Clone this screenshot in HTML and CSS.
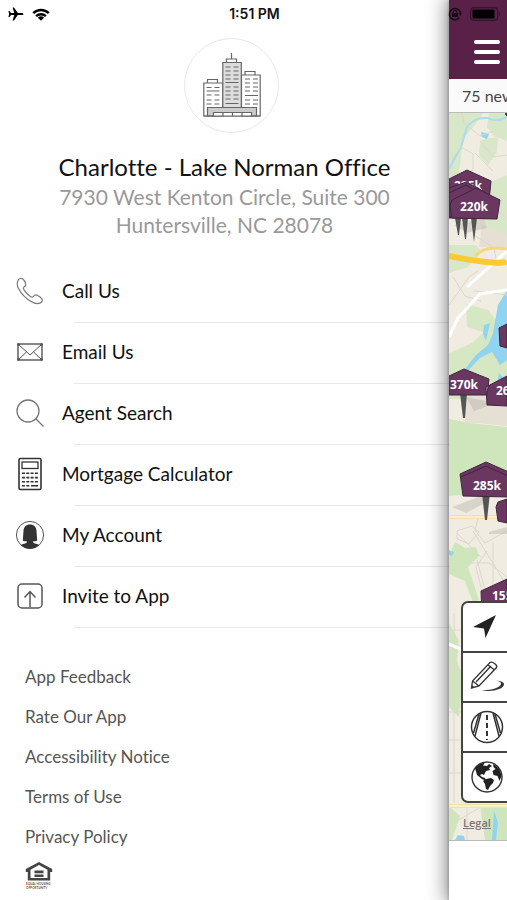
FILE: index.html
```html
<!DOCTYPE html>
<html lang="en">
<head>
<meta charset="utf-8">
<meta name="viewport" content="width=device-width, initial-scale=1">
<title>Office menu</title>
<link rel="stylesheet" href="styles.css">
</head>
<body>
<div class="app">
  <div class="status">
    <span class="status-left">
      <svg width="16" height="14" viewBox="0 0 16 14" aria-hidden="true"><path d="M15.500 7c0-.7-1-1.100-2-1.100H9.800L6 .4H4.600L6.300 5.900H3L1.500 4H.4L1.200 7 .4 10h1.100L3 8.100h3.300L4.600 13.600H6L9.800 8.100h3.700c1 0 2-.4 2-1.100z"/></svg>
      <svg width="18" height="13" viewBox="0 0 18 13" aria-hidden="true"><g fill="none" stroke="#000" stroke-width="2.400"><path d="M1.200 5.200a11.200 11.200 0 0 1 15.600 0"/><path d="M4.100 8.200a7 7 0 0 1 9.800 0"/></g><path d="M9 12.700 5.900 9.700a4.500 4.500 0 0 1 6.200 0z"/></svg>
    </span>
    <span class="status-time">1:51 PM</span>
    <span class="status-right">
      <svg width="14" height="14" viewBox="0 0 14 14" aria-hidden="true"><path d="M11.500 10.500A5.600 5.600 0 1 1 12.500 6" fill="none" stroke="#160b14" stroke-width="1.500"/><path d="M10.500 6h3.500l-1.700 3z" fill="#160b14"/><path d="M4 6.300h6V10H4z" fill="#160b14"/><path d="M5.200 6.500V5a1.800 1.800 0 0 1 3.600 0v1.500" fill="none" stroke="#160b14"/></svg>
      <svg width="31" height="14" viewBox="0 0 31 14" aria-hidden="true"><rect x=".7" y=".7" width="27" height="12.600" rx="3" fill="none" stroke="#35142d" stroke-width="1.200"/><rect x="2.500" y="2.500" width="22" height="9" rx="1"/><path d="M29 4.500q2 2.500 0 5z" fill="#35142d"/></svg>
    </span>
  </div>

  <main class="drawer">
    <header class="office">
      <div class="office-badge">
        <svg width="58" height="64" viewBox="0 0 58 64" fill="#fff" stroke="#666" stroke-width="1.200" aria-hidden="true">
          <path d="M28.500 0v6"/><path d="M23.500 9V6h10v3M4.500 30v-3.500h10V30M42 22v-3.500h10V22"/>
          <path d="M.8 30h19v33H.8zM38.500 22h18.700v41H38.500z"/>
          <path fill="#ddd" d="M19.800 9.500h18.500V55H19.800z"/>
          <path stroke-dasharray="5 3" d="M22.500 14h14M22.500 18h14M22.500 22h14M22.500 26h14M22.500 34h14M22.500 38h14M22.500 42h14M22.500 46h14M3.500 34.500h14M3.500 42h14M3.500 47h14M3.500 51h14M42 26h13M42 30h13M42 34h13M42 38h13M42 47h13M42 51h13"/>
          <path d="M22.500 29.500h13M22.500 50.500h13M3.500 38h13M42 42.500h13"/>
          <path fill="#ccc" d="M4.500 63v-8.500h49V63z"/><path d="M10.500 63v-3.500h38V63M20 59.500V63M29.500 59.500V63M39 59.500V63M.8 63h56.400"/>
        </svg>
      </div>
      <h1>Charlotte - Lake Norman Office</h1>
      <p>7930 West Kenton Circle, Suite 300<br>Huntersville, NC 28078</p>
    </header>

    <nav class="menu" aria-label="Office">
      <a href="#call"><svg viewBox="0 0 30 34" aria-hidden="true"><path fill="none" stroke="#777" stroke-width="1.200" d="M3 6.500C4 4.500 6 3.800 7.500 4.800c1.500 1.200 2.700 3.200 3.200 4.900.4 1.500-.5 2.500-1.700 3.300-1 .8-.7 1.800 0 2.900 1.500 2.500 3.800 4.800 6.300 6.500 1.300.9 2.300 1 3.200-.1 1-1.200 2.200-1.700 3.600-1.100 1.700.7 3.600 2 4.700 3.400 1.100 1.600.4 3.300-1.500 4.300-2.700 1.400-5.700.7-8.700-1.100C10.800 24.500 6.200 19.800 3.500 14.500 2 11.700 1.800 8.900 3 6.500z"/></svg><span>Call Us</span></a>
      <a href="#email"><svg viewBox="0 0 30 34" aria-hidden="true"><g fill="none" stroke="#555"><rect x="3" y="9" width="24" height="16" stroke-width="1.400"/><path d="M3 9l12 11L27 9M3 25l8.500-8M27 25l-8.500-8"/></g><path fill="#444" d="M2.500 8.500h2v2h-2zM25.500 8.500h2v2h-2zM2.500 23.500h2v2h-2zM25.500 23.500h2v2h-2z"/></svg><span>Email Us</span></a>
      <a href="#agents"><svg viewBox="0 0 30 34" aria-hidden="true"><g fill="none" stroke="#777" stroke-width="1.300"><circle cx="13" cy="15" r="11"/><path d="M20.500 22.500l8 8"/></g></svg><span>Agent Search</span></a>
      <a href="#mortgage"><svg viewBox="0 0 30 34" aria-hidden="true"><g fill="none" stroke="#333"><rect x="4" y="1.500" width="22" height="31" rx="1.500" stroke-width="1.600"/><rect x="7" y="5" width="16" height="6.500" stroke-width="1.300"/><path stroke-width="1.600" stroke-dasharray="3 1.300" d="M7 16.300h17M7 20.600h17M7 24.800h17"/><path stroke-width="1.600" d="M7 28.800h3M11.300 28.800h3M16 28.800h7"/></g></svg><span>Mortgage Calculator</span></a>
      <a href="#account"><svg viewBox="0 0 30 34" aria-hidden="true"><circle cx="15" cy="17" r="13.600" fill="#fff" stroke="#555"/><path fill="#333" d="M15 6.500c-4 0-6.300 2.600-6.500 6.500L7.800 22.500c1.500.8 2.700.9 4 .8v1.200c-1 1.200-4.300 1.500-6 2.500 2.400 2.400 5.700 3.700 9.200 3.700s6.800-1.300 9.200-3.700c-1.700-1-5-1.300-6-2.500v-1.200c1.300.1 2.500 0 4-.8L21.500 13C21.300 9.100 19 6.500 15 6.500z"/></svg><span>My Account</span></a>
      <a href="#invite"><svg viewBox="0 0 30 34" aria-hidden="true"><g fill="none" stroke="#555" stroke-width="1.500"><rect x="3" y="5" width="24" height="24" rx="4"/><path d="M15 28V13M9.500 18.500 15 12.500l5.500 6"/></g></svg><span>Invite to App</span></a>
    </nav>

    <footer class="links">
      <a href="#feedback">App Feedback</a>
      <a href="#rate">Rate Our App</a>
      <a href="#accessibility">Accessibility Notice</a>
      <a href="#terms">Terms of Use</a>
      <a href="#privacy">Privacy Policy</a>
      <svg class="housing" width="28" height="28" viewBox="0 0 28 28" role="img" aria-label="Equal Housing Opportunity">
        <path fill="#444" fill-rule="evenodd" d="M14 1 .8 8v3h2v8.500h22.400V11h2V8zM14 4l8.500 4.700V17h-17V8.700zM9.500 9.500v2.700h9V9.500zM9.500 13.500V16h9v-2.500z"/>
        <text x="1" y="24">EQUAL HOUSING</text><text x="1" y="27.500">OPPORTUNITY</text>
      </svg>
    </footer>
  </main>

  <section class="behind" aria-label="Map">
    <div class="topbar"><button class="burger" aria-label="Menu"><i></i><i></i><i></i></button></div>
    <div class="news">75 new</div>
    <div class="map">
      <svg class="canvas" viewBox="0 0 58 727" preserveAspectRatio="xMinYMin slice" role="img" aria-label="Homes for sale">
        <rect width="58" height="727" fill="#f1ece2"/>
        <g fill="#cfe6bd">
          <path d="M0 0h34l-9 13-11 13-4 34-10 8zM40 0h18v28l-13-5-7-9zM31 28q9-4 18-3l-1 14-9 13-9-10zM39 70l19-8v62l-19-6-8-24zM0 132h27l6 7-14 15-19 6z" opacity=".75"/>
          <path d="M17 191l22 6 12 14-8 11-25-8zM0 240l23-10 20-18 15-4v78H0z" opacity=".8"/>
          <path d="M0 306l20 4 38 4v64l-58 5z"/>
          <path d="M6 429l10 6 11-1 3 9-11 11 4 12 7 21-5 5-9-24-16-7V443z"/>
          <path d="M0 510l10 18-2 20 6 16-4 40-10-10zM0 693l11 10-8 24H0zM31 692l27 1v34H36z"/>
        </g>
        <g fill="#e6dfd4"><path d="M14 286l20-6 24 10v23l-42-4zM33 112l25 10v12H30z"/></g>
        <g fill="#91d4f1">
          <path d="M58 177l-9 15-5 28-5 12-12 10-14 18 1 3 17-18 12-6 8 13 7-5zM35 212l6-2-4 18-3-7zM32 19l8 2-2 5-5-2zM50 260l5 5-1 12-6-6z"/>
          <path d="M0 437l5 2-2 4-3-1zM45 697l4 13-2 17h-4zM9 722l6 1 1 4H6z"/>
        </g>
        <g fill="none">
          <path stroke="#a9dced" stroke-width="2" d="M0 56l12-22 6-20q7-10 21-9 8 5 19-1"/>
          <path stroke="#ddd7cd" d="M2 47l10-13 12 7v15L10 76M26 40l18 18M34 32l10 12 14-2M25 122l20 13 3 16M0 192l20-28 9-6M25 178l33 4M31 84l25 20M13 0l2 10 16 13 14-5M4 164l12 19 16 5M8 418l15-5 7 6-10 12-12-5zM24 418l34 55M30 402l-4 15 10 13 22-12M15 450h25l18 14M28 447l10 38M38 438l-11 16 7 29M44 430v56M8 420l24 24M5 500v190M5 517h15M0 535h22M0 557h24M0 599h16M0 627h16M0 660h12M18 690v37M4 710l28-16"/>
          <path stroke="#fff" stroke-width="3" d="M18 174 58 138M0 224l9-19 22-24 27-4M0 531l58 25"/>
          <path stroke="#f5d77c" stroke-width="3" d="M26 143q9-11 32-7"/>
          <path stroke="#f9ca32" stroke-width="6" d="M0 143q18 4 37 6t21-1"/>
          <path stroke="#f5dfa4" stroke-width="4" d="M0 404h58M0 693h58"/>
          <path stroke="#f9efcb" stroke-width="2" d="M0 404h58M0 693h58"/>
        </g>
        <g fill="#a8a89e" opacity=".35"><path d="M5 112l30-7 3 10-20 5zM3 394l34-13 3 7-23 12zM17 284l30 6-22 8zM40 419l18-5v7H40z"/></g>
        <g fill="#555"><path d="M6 105h6l-2 17H9zM13 105h6l-2 21h-1zM22 105h6l-3 24zM11 280h7l-2 25h-2zM33 380h8l-3 27h-2z"/></g>
        <g class="pins">
          <path d="M18 57l24 11-2 20H0V66z"/>
          <path d="M58 211l-8 4 1 18 7 2zM15 256l25 10-2 16H0v-19zM58 263l-21 11 1 18 20 1zM37 349l25 11-2 24-46-1-3-22zM58 386l-9 3-2 5 2 14 9 2zM58 466l-26 12 1 25h25z"/>
          <path d="M12 364l25-11 24 11M56 1l2-1v3z"/>
        </g>
        <g class="prices"><text x="5" y="77">225k</text></g>
        <path class="cover" d="M0 75l17-6 12 6 15 10v20H0z"/>
        <path class="cover" d="M0 80l17-8 20 12v20H0z"/>
        <path class="cover" d="M3 87l24-12 24 12-3 19-45-1-2-12z"/>
        <g class="prices"><text x="11" y="98">220k</text><text x="1" y="276">370k</text><text x="47" y="282">260k</text><text x="24" y="377">285k</text><text x="43" y="487">155k</text></g>
      </svg>
      <div class="tools">
        <button aria-label="My location"><svg viewBox="0 0 34 34"><path fill="#222" d="M26 5 15.500 28 14 18.500 3 17z"/></svg></button>
        <button aria-label="Draw area"><svg viewBox="0 0 34 34"><g fill="none" stroke="#333" stroke-width="1.300"><path d="m1.500 28 1-7L20 2.500c2-1.500 8 2.500 6.500 5L9 26zM2.500 21 9 26M18 5l6.500 5M6 22 21 6"/></g><path fill="#333" d="m1.500 28 .5-3 2 2zM10 30c9 1 20-2 21-6 .3-1.700-2-2.800-5-3.500 6 .5 8 2 8 4-.3 5-13 8-24 5.500z"/></svg></button>
        <button aria-label="Roads"><svg viewBox="0 0 34 34"><g fill="none" stroke="#333" stroke-width="1.500"><circle cx="17" cy="17" r="15.500"/><path d="M11 3 5 26M23 3l6 23M9 4 3.500 23M25 4l5.500 19"/><path stroke-width="2" stroke-dasharray="5 3" d="M17 5v25"/></g></svg></button>
        <button aria-label="Satellite"><svg viewBox="0 0 34 34"><circle cx="17" cy="17" r="15" fill="#fff" stroke="#333" stroke-width="1.400"/><path fill="#222" d="M5 8c3-3 6-5 10-5.500l-2 3 4 .5 2-2 3 2-3 2 1 2-4 1-2 4-2-1-2 1 2 2 3 1 1 3-4-2-5-4zM16 19l5-1 3 2-1 3-3 3-2 4-2-1-1-5-2-3zM23 4c5 2 8 7 8.500 12l-2 5-2-5-4-1-1-4 3-2-2-2z"/></svg></button>
      </div>
      <a class="legal" href="#legal">Legal</a>
    </div>
  </section>
</div>
</body>
</html>
```
FILE: styles.css
```css
* { box-sizing: border-box; }
body {
  margin: 0;
  background: #fff;
  color: #111;
  font-family: Lato, "Open Sans", sans-serif;
  font-variant-ligatures: none;
}
a { color: inherit; text-decoration: none; }
svg { display: block; flex: none; }
button { padding: 0; border: 0; font: inherit; }

.app {
  position: relative;
  display: grid;
  grid-template-columns: minmax(0, 1fr) 58px;
  min-height: 100vh;
  overflow: hidden;
}

.status {
  position: absolute;
  z-index: 2;
  inset: 0 0 auto;
  display: grid;
  grid-template-columns: 1fr auto 1fr;
  align-items: center;
  height: 28px;
  padding: 0 6px 0 8px;
}
.status-left, .status-right { display: flex; align-items: center; gap: 8px; }
.status-right { justify-content: flex-end; }
.status-time { font: 600 14px/16px Inter, sans-serif; }

.drawer { display: flex; flex-direction: column; }
.office {
  display: flex;
  flex-direction: column;
  align-items: center;
  padding-top: 38px;
  text-align: center;
}
.office-badge {
  display: flex;
  justify-content: center;
  width: 95px;
  height: 95px;
  margin-left: 14px;
  padding-top: 14px;
  border: 1px solid #e8e8e8;
  border-radius: 50%;
}
.office h1 { margin: 18px 0 0; font-size: 24px; font-weight: 400; line-height: 32px; }
.office p { margin: 0; color: #999; font-size: 21px; line-height: 28px; }

.menu { margin-top: 23px; font-size: 19px; }
.menu a {
  display: flex;
  align-items: center;
  gap: 17px;
  height: 61px;
  padding: 0 15px 4px;
  background: linear-gradient(#e8e8e8, #e8e8e8) 74px 100% / 100% 1px no-repeat;
}
.menu svg { width: 30px; height: 34px; }

.links {
  display: flex;
  flex-direction: column;
  align-items: flex-start;
  padding: 29px 25px 10px;
  color: #555;
  font-size: 17px;
}
.links a { line-height: 40px; }
.housing { margin-top: 4px; }
.housing text { fill: #555; font: 700 3px Lato, sans-serif; }

.behind {
  display: flex;
  flex-direction: column;
  min-width: 0;
  padding-bottom: 61px;
  background: #fff;
  box-shadow: 0 0 4px rgba(0, 0, 0, .25), 0 0 20px 2px rgba(0, 0, 0, .5);
}
.topbar { height: 79px; padding: 38px 0 0 25px; background: #592148; }
.burger { display: grid; gap: 5px; width: 26px; padding-top: 2px; background: none; }
.burger i { height: 4px; border-radius: 2px; background: #fff; }
.burger { gap: 6px; }
.news {
  height: 34px;
  padding-left: 13px;
  overflow: hidden;
  border-bottom: 1px solid #bbb;
  color: #444;
  background: #fafafa;
  font-size: 16px;
  line-height: 34px;
  white-space: nowrap;
}
.map { position: relative; flex: 1; overflow: hidden; border-bottom: 1px solid #bbb; }
.canvas { width: 100%; height: 100%; }
.pins, .cover { fill: #693760; stroke: #432440; stroke-width: 1; }
.prices { fill: #fff; font: 700 12px "Open Sans", sans-serif; }

.tools {
  position: absolute;
  left: 12px;
  right: -8px;
  bottom: 37px;
  display: grid;
  grid-auto-rows: 48px;
  gap: 2px;
  overflow: hidden;
  border: 2px solid #444;
  border-radius: 7px;
  background: #444;
}
.tools button { padding-left: 7px; background: #fff; }
.tools svg { width: 34px; height: 34px; }
.legal {
  position: absolute;
  left: 14px;
  bottom: 10px;
  color: #777;
  font: 600 11px/14px "Open Sans", sans-serif;
  text-decoration: underline;
}
```
